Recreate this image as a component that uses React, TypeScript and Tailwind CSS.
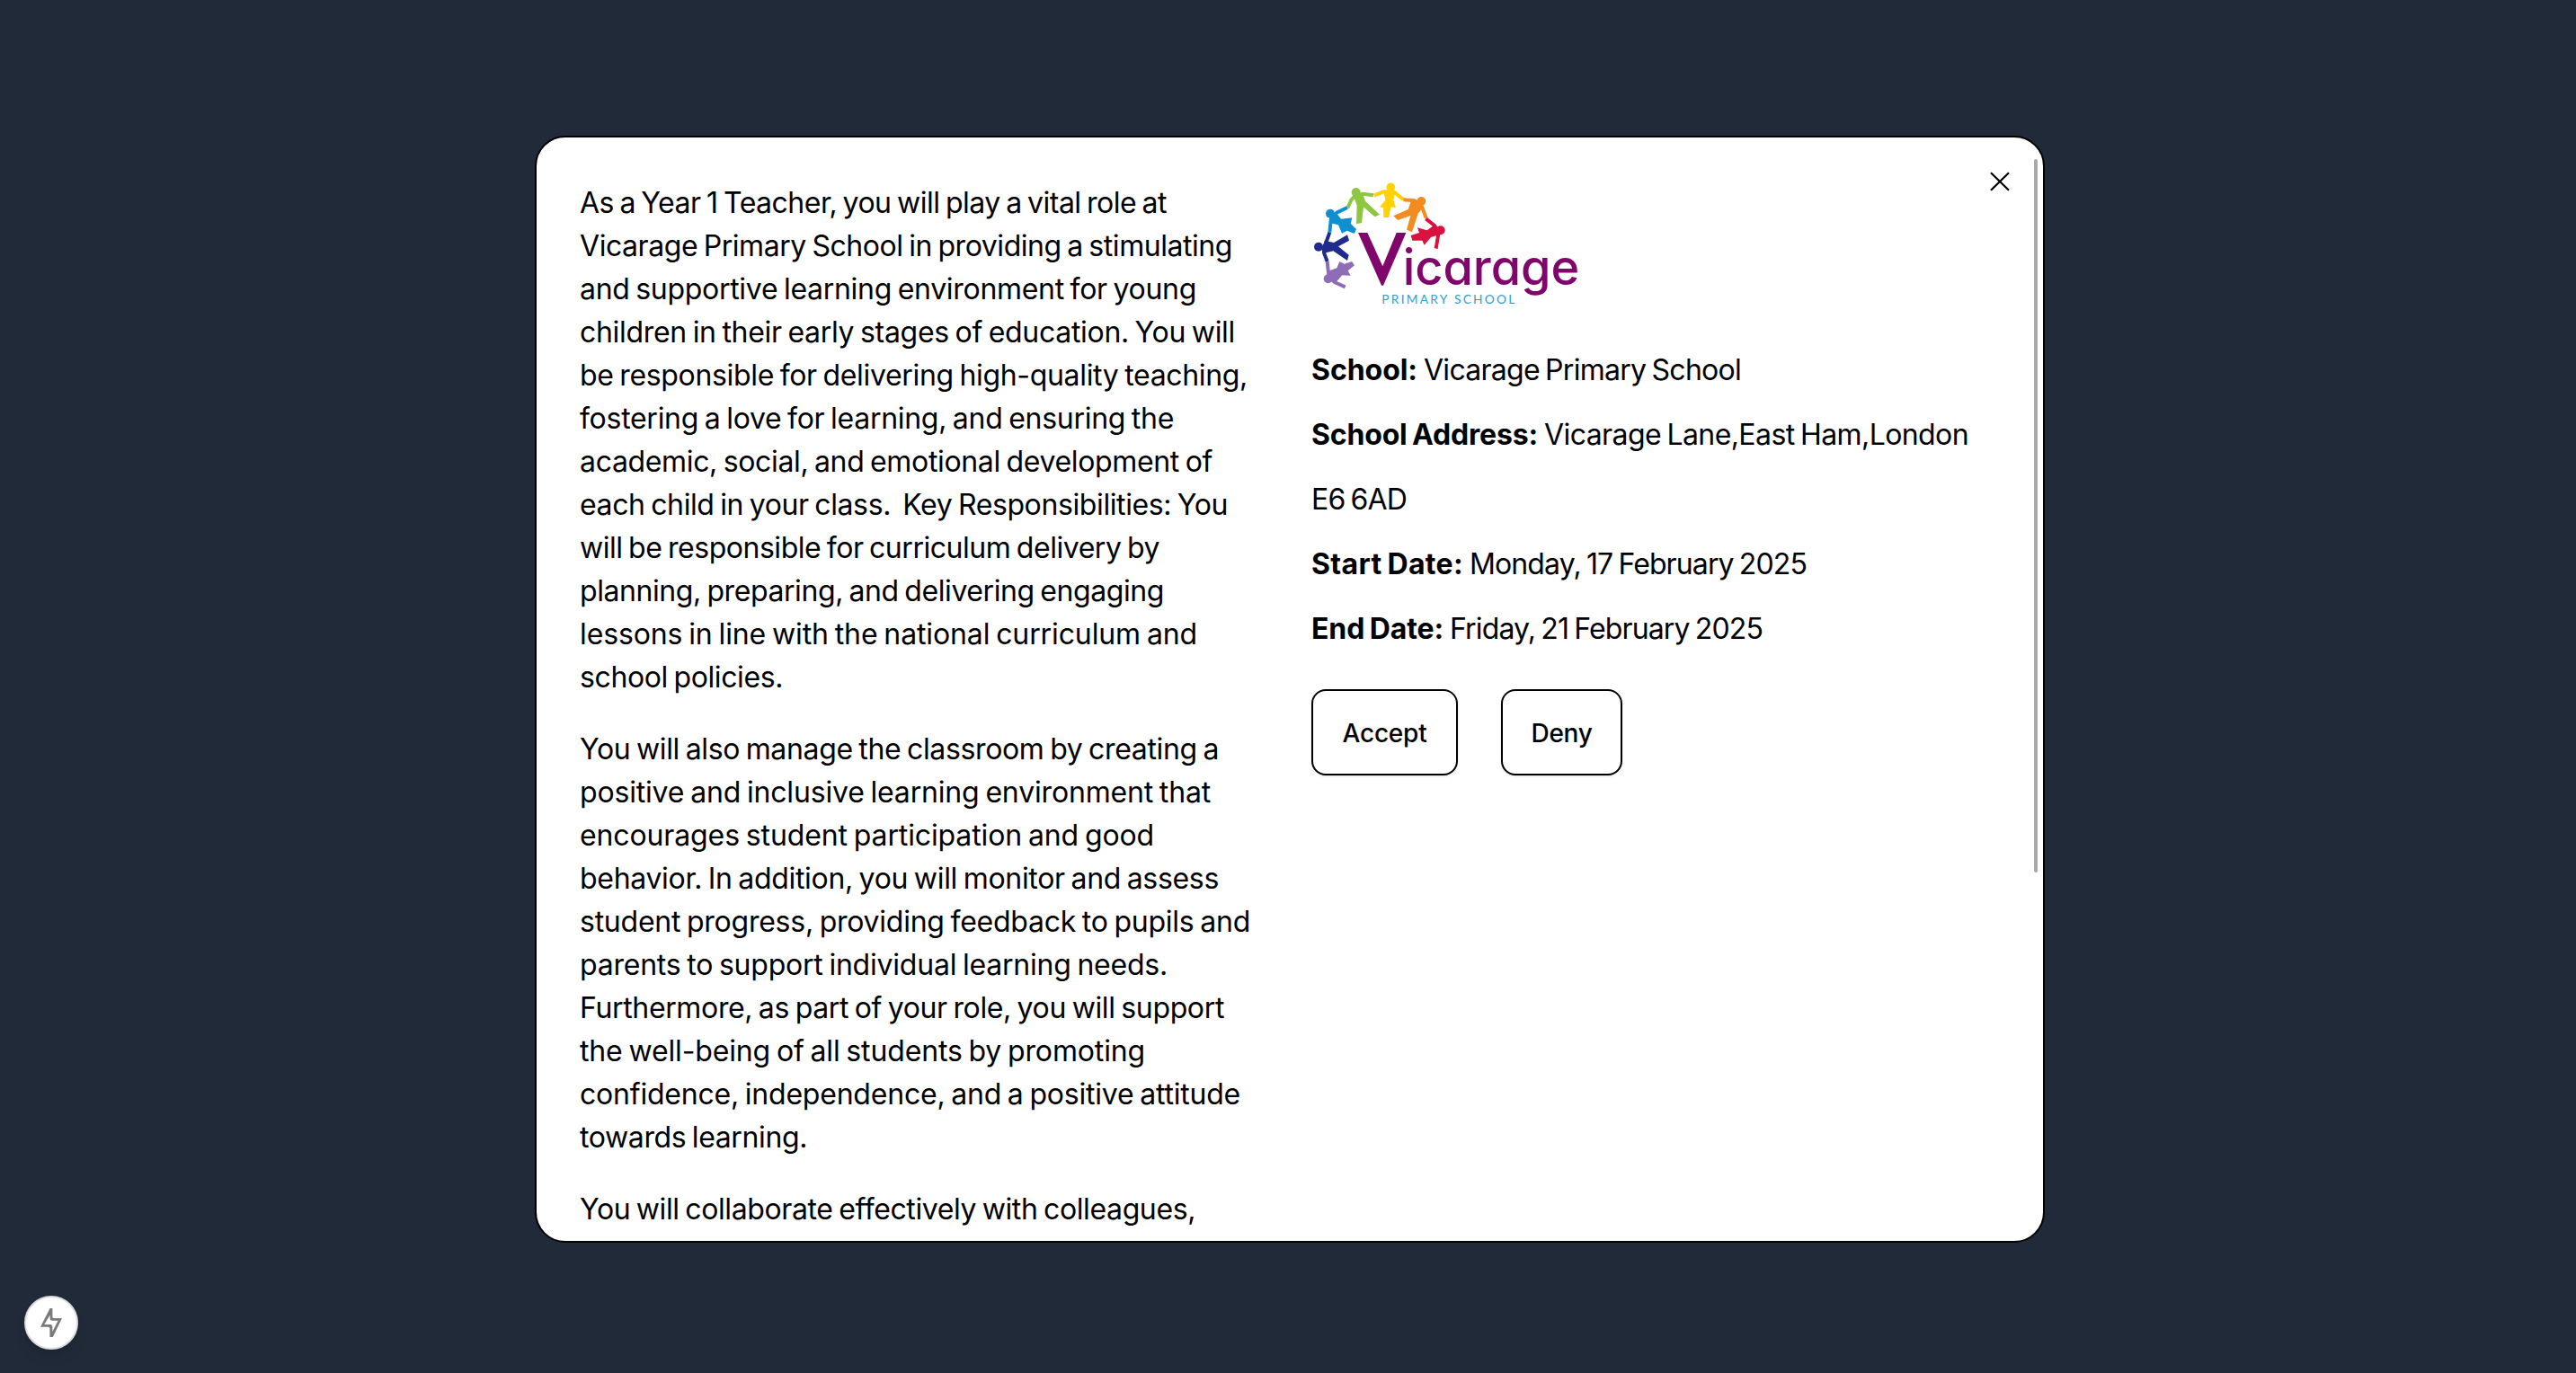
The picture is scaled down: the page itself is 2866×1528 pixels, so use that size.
import { useLayoutEffect, useRef, useState } from "react";

type Line = [text: string, width: number];

const paragraphs: Line[][] = [
  [
    ["As a Year 1 Teacher, you will play a vital role at", 653],
    ["Vicarage Primary School in providing a stimulating", 726],
    ["and supportive learning environment for young", 686],
    ["children in their early stages of education. You will", 729],
    ["be responsible for delivering high-quality teaching,", 743],
    ["fostering a love for learning, and ensuring the", 661],
    ["academic, social, and emotional development of", 704],
    ["each child in your class. \u00a0Key Responsibilities: You", 721],
    ["will be responsible for curriculum delivery by", 645],
    ["planning, preparing, and delivering engaging", 650],
    ["lessons in line with the national curriculum and", 687],
    ["school policies.", 226],
  ],
  [
    ["You will also manage the classroom by creating a", 711],
    ["positive and inclusive learning environment that", 702],
    ["encourages student participation and good", 639],
    ["behavior. In addition, you will monitor and assess", 711],
    ["student progress, providing feedback to pupils and", 746],
    ["parents to support individual learning needs.", 654],
    ["Furthermore, as part of your role, you will support", 717],
    ["the well-being of all students by promoting", 629],
    ["confidence, independence, and a positive attitude", 735],
    ["towards learning.", 253],
  ],
  [["You will collaborate effectively with colleagues,", 685]],
];

/** One run of text whose tracking is adjusted to reach the given width. */
function Fit({ text, width, className = "" }: { text: string; width: number; className?: string }) {
  const ref = useRef<HTMLSpanElement>(null);
  const [tracking, setTracking] = useState(0);
  useLayoutEffect(() => {
    const natural = ref.current!.getBoundingClientRect().width;
    setTracking((t) => t + (width - natural) / text.length);
  }, [text, width]);
  return (
    <span
      ref={ref}
      className={`inline-block translate-y-px whitespace-pre [word-spacing:-2px] ${className}`}
      style={{ letterSpacing: `${tracking}px` }}
    >
      {text}
    </span>
  );
}

function Detail({ label, value, rest }: { label: Line; value: Line; rest?: Line }) {
  return (
    <div className="leading-[72px]">
      <div className="flex gap-[7px]">
        <Fit text={label[0]} width={label[1]} className="font-bold" />
        <Fit text={value[0]} width={value[1]} />
      </div>
      {rest && <Fit text={rest[0]} width={rest[1]} className="align-top" />}
    </div>
  );
}

function SchoolLogo() {
  return (
    <svg viewBox="27 33 933 426" className="block h-[142px] w-[311px]" aria-label="Vicarage Primary School">
      <g fill="none" strokeWidth="12" strokeLinejoin="round">
        <path stroke="#8dc63f" d="M234 82 L200 77 L172 84 L160 98 L148 124" />
        <path stroke="#ffd200" d="M236 83 L268 70 L302 70 L334 97" />
        <path stroke="#f28c1e" d="M334 97 L372 100 L396 120 L410 158" />
        <path stroke="#d9123f" d="M409 160 L438 183 L452 204 L443 260" />
        <path stroke="#0f8fd0" d="M147 123 L112 140 L93 158 L88 206" />
        <path stroke="#1f2c8e" d="M88 206 L77 237 L69 255 L69 274 L80 303" />
        <path stroke="#8f6cb8" d="M80 303 L85 350 L104 372 L140 388" />
      </g>
      <g fill="#8dc63f">
        <circle cx="176" cy="72" r="15" />
        <path d="M167 82 L198 76 L207 102 L255 146 L239 154 L201 121 L195 174 L177 178 L179 116 Z" />
      </g>
      <g fill="#ffd200">
        <circle cx="292" cy="55" r="14.5" />
        <path d="M268 67 L306 68 L301 98 L309 124 L292 121 L286 156 L268 156 L267 123 L255 121 L274 98 Z" />
      </g>
      <g fill="#f28c1e">
        <circle cx="394" cy="102" r="15" />
        <path d="M362 94 L402 120 L383 143 L363 205 L345 197 L358 150 L315 165 L301 151 L350 129 Z" />
      </g>
      <g fill="#d9123f">
        <circle cx="458" cy="199" r="15" />
        <path d="M439 180 L449 215 L426 222 L404 248 L397 233 L364 233 L359 216 L387 207 L381 190 L413 199 Z" />
      </g>
      <g fill="#0f8fd0">
        <circle cx="90" cy="143" r="15" />
        <path d="M110 140 L126 161 L163 157 L158 176 L177 195 L170 210 L146 200 L129 209 L117 181 L88 174 Z" />
      </g>
      <g fill="#1f2c8e">
        <circle cx="51" cy="254" r="15" />
        <path d="M70 233 L102 240 L147 214 L153 233 L117 253 L152 281 L147 300 L100 268 L69 275 Z" />
      </g>
      <g fill="#8f6cb8">
        <circle cx="83" cy="361" r="15" />
        <path d="M80 336 L112 325 L121 303 L137 311 L162 303 L171 316 L149 334 L158 350 L130 349 L106 376 L86 355 Z" />
      </g>
      <path d="M183 207 H214 L265 319 L311 207 H343 L267 383 H261 Z" fill="#80066c" />
      <text
        x="332"
        y="382"
        textLength="590"
        lengthAdjust="spacingAndGlyphs"
        fill="#80066c"
        fontSize="165"
        fontWeight="500"
        fontFamily="Inter, sans-serif"
        style={{ fontFeatureSettings: '"cv11"' }}
      >
        icarage
      </text>
      <text x="262" y="444" textLength="444" fill="#2b9fd3" fontSize="41" fontFamily="Lato, sans-serif">
        PRIMARY SCHOOL
      </text>
    </svg>
  );
}

function ActionButton({ text, width, className }: { text: string; width: number; className: string }) {
  return (
    <button
      className={`flex h-24 items-center justify-center rounded-2xl border-2 border-black bg-white text-[28px] font-medium shadow-sm ${className}`}
    >
      <Fit text={text} width={width} />
    </button>
  );
}

export default function App() {
  return (
    <div className="relative h-[1528px] w-[2866px] overflow-hidden bg-[#212a38] pt-[151px] pl-[595px] font-['Inter',sans-serif] text-black">
      <div className="relative flex h-[1232px] w-[1680px] gap-[66px] overflow-hidden rounded-[34px] border-2 border-black bg-white p-12 text-[32px] leading-[48px]">
        <div className="flex w-[748px] shrink-0 flex-col gap-8">
          {paragraphs.map((lines, i) => (
            <p key={i} className="flex flex-col items-start">
              {lines.map(([text, width]) => (
                <Fit key={text} text={text} width={width} />
              ))}
            </p>
          ))}
        </div>

        <div className="flex flex-1 flex-col">
          <SchoolLogo />
          <div className="mt-8">
            <Detail label={["School:", 118]} value={["Vicarage Primary School", 353]} />
            <Detail
              label={["School Address:", 252]}
              value={["Vicarage Lane,East Ham,London", 472]}
              rest={["E6 6AD", 106]}
            />
            <Detail label={["Start Date:", 169]} value={["Monday, 17 February 2025", 375]} />
            <Detail label={["End Date:", 147]} value={["Friday, 21 February 2025", 348]} />
          </div>
          <div className="mt-8 flex gap-12">
            <ActionButton text="Accept" width={94} className="w-[163px]" />
            <ActionButton text="Deny" width={68} className="w-[135px]" />
          </div>
        </div>

        <button className="absolute top-[38px] right-[37px]" aria-label="Close">
          <svg viewBox="0 0 22 22" className="block size-[22px]" fill="none" stroke="#000" strokeWidth="2.2">
            <path d="M1 1.2 L21 20.8 M21 1.2 L1 20.8" />
          </svg>
        </button>
        <div className="absolute top-6 right-[6px] h-[794px] w-1 rounded-full bg-[#a8a8a8]" />
      </div>

      <div className="absolute bottom-[26px] left-[27px] flex size-[60px] items-center justify-center rounded-full border-2 border-[#dcdcdc] bg-white shadow-lg">
        <svg viewBox="0 0 24 32" className="h-8 w-6" fill="#7a7a7a" fillRule="evenodd">
          <path d="M10.6 0 H13.4 V9.5 Q13.4 11 15 11 H24 L13.8 32 H10.4 V22.3 Q10.4 20.8 8.8 20.8 H0 Z M10.6 7.5 L4.3 18 H11 Q13.3 18 13.3 20.3 V26 L19.6 13.8 H13 Q10.6 13.8 10.6 11.5 Z" />
        </svg>
      </div>
    </div>
  );
}
